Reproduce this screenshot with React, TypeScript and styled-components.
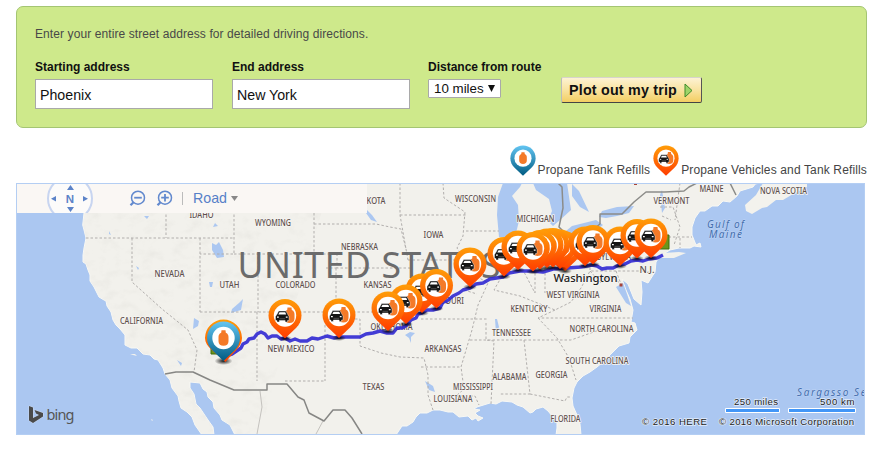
import React from 'react';
import styled, { createGlobalStyle } from 'styled-components';

const Global = createGlobalStyle`
  * { box-sizing: border-box; }
  body { margin: 0; background: #fff; font-family: "Liberation Sans", Arial, sans-serif; color: #444; overflow: hidden; }
`;
const Page = styled.main`
  width: 885px; height: 453px; padding: 6px 18px 0 16px;
  display: flex; flex-direction: column;
`;
const Panel = styled.form`
  width: 851px; height: 122px; background: #cee98b; border: 1px solid #a4c573; border-radius: 7px;
  padding: 20px 18px 0;
`;
const Intro = styled.p`
  margin: 0; font-size: 12px; line-height: 14px; letter-spacing: 0.09px; color: #484848;
`;
const Fields = styled.div`
  display: flex; align-items: flex-start; margin-top: 19px;
`;
const Field = styled.label<{ $width: number }>`
  width: ${p => p.$width}px; display: flex; flex-direction: column; align-items: flex-start;
  font-size: 12px; line-height: 14px; font-weight: bold; color: #111;
`;
const TextInput = styled.input`
  width: 178px; height: 30px; margin-top: 5px; padding: 2px 4px 0; border: 1px solid #a9a9a9;
  background: #fff; font: 14.2px "Liberation Sans", Arial, sans-serif; color: #111; outline: none;
`;
const Select = styled.button`
  width: 73px; height: 19px; margin-top: 5px; padding: 0 5px 1px; border: 1px solid #a9a9a9; border-radius: 1px;
  background: #fff; display: flex; align-items: center; justify-content: space-between;
  font: 13.33px "Liberation Sans", Arial, sans-serif; color: #111; white-space: nowrap;
`;
const Submit = styled.button`
  width: 141px; height: 26px; margin-top: 17px; padding: 0 8px 0 7px; display: flex; align-items: center; justify-content: space-between;
  background: linear-gradient(#fdf2d3, #f9e3a0 50%, #f3ce62); border: 1px solid; border-color: #d8d4cc #555 #444 #bbb;
  border-radius: 2px; font: bold 14.3px "Liberation Sans", Arial, sans-serif; letter-spacing: 0.2px; color: #111; white-space: nowrap;
`;
const Legend = styled.div`
  height: 55px; display: flex; justify-content: flex-end; align-items: flex-start; padding-top: 17px;
`;
const LegendItem = styled.div`
  display: flex; align-items: flex-start; margin-left: 3px;
  font-size: 12px; line-height: 14px; color: #444; white-space: nowrap; letter-spacing: 0.14px;
`;
const LegendText = styled.span`padding-top: 18px;`;
const LegendIcon = styled.svg`width: 26px; height: 34px; margin-right: 2px; overflow: visible;`;
const MapBox = styled.section`
  position: relative; width: 849px; height: 252px; border: 1px solid #b4cef3; overflow: hidden; background: #abc7f1;
`;
const MapDrawing = styled.svg`display: block; width: 847px; height: 250px;`;
const MapBar = styled.nav`
  position: absolute; top: 0; left: 0; width: 350px; height: 29px; padding-left: 30px;
  background: #faf7f4; display: flex; align-items: center; color: #5680c8; font-size: 14.2px;
`;
const Compass = styled.svg`width: 46px; height: 29px;`;
const ZoomIcon = styled.svg`width: 17px; height: 17px;`;
const Gap = styled.span<{ $w: number }>`width: ${p => p.$w}px;`;
const Divider = styled.span`width: 1px; height: 13px; background: #bbb; margin: 0 10px 0 9px;`;
const RoadLabel = styled.span`padding-bottom: 1px;`;
const Caret = styled.svg`width: 7px; height: 5px; margin-left: 4px;`;

type Pt = [number, number];
const pins: Pt[] = [
  [285, 315.5], [339, 315], [422, 290], [406, 301], [388, 308], [436.5, 285.5], [470, 264],
  [504, 253.5], [518, 247], [565, 248], [560, 246], [553, 244.5], [547, 245], [540, 246.5], [533, 248.5],
  [585, 243], [593, 241.5], [620, 243], [637, 235.5], [651, 235],
];

const labels: [string, number, number, number][] = [
  ['IDAHO', 189.5, 217.5, 24], ['KOTA', 366.5, 203.5, 19], ['WYOMING', 255, 225.5, 36], ['NEVADA', 154.5, 277, 30],
  ['UTAH', 219.5, 287.5, 20], ['COLORADO', 275.5, 287.5, 40], ['NEBRASKA', 341, 249.5, 37], ['KANSAS', 363.5, 287.5, 28],
  ['IOWA', 423.5, 237.5, 20], ['WISCONSIN', 455, 201.5, 41], ['MICHIGAN', 516.5, 221.5, 38], ['CALIFORNIA', 120, 323.5, 43],
  ['NEW MEXICO', 267.5, 351.5, 47], ['OKLAHOMA', 370.5, 329.5, 42], ['TEXAS', 362.5, 389.5, 22], ['ARKANSAS', 424.5, 351.5, 37],
  ['MISSOURI', 427, 303.5, 37], ['WEST VIRGINIA', 546.5, 297.5, 53], ['KENTUCKY', 510.5, 311.5, 37], ['VIRGINIA', 589.5, 311.5, 32],
  ['NORTH CAROLINA', 569.5, 331.5, 64], ['TENNESSEE', 492, 335.5, 39], ['SOUTH CAROLINA', 565.5, 363.5, 63],
  ['ALABAMA', 492.5, 379.5, 34], ['GEORGIA', 535.5, 377.5, 32], ['MISSISSIPPI', 453, 389.5, 40], ['LOUISIANA', 433.5, 401.5, 39],
  ['FLORIDA', 550.5, 421.5, 30], ['MAINE', 699.5, 191.5, 24], ['VERMONT', 653.5, 203.5, 36], ['NOVA SCOTIA', 760, 193.5, 47],
  ['PENNSYLVANIA', 577, 259.5, 54],
];

const HEAD = 'M-16.5 0C-16.5 -9.5 -9 -16.5 0 -16.5S16.5 -9.5 16.5 0C16.5 5 14.5 9 11 12.500L0 23L-11 12.500C-14.5 9 -16.5 5 -16.5 0Z';

const Tank = () => (
  <path d="M2.500 -8H6.500L6.800 -5.500C9 -4.500 9.500 -3 9.500 -1V3C9.500 6 7.500 7.500 4.500 7.500S-.5 6 -.5 3V-1C-.5 -3 0 -4.500 2.200 -5.500Z" fill="#f47a28" />
);
const CarPin = () => (
  <g>
    <path d={HEAD} fill="url(#orange)" />
    <circle r="11.2" fill="#fff" />
    <Tank />
    <path d="M-9.5 5V1L-8 -1.2L-6.3 -4.500H1L2.700 -1.200L4 1V5H2.500V6.500H.2V5H-5.700V6.500H-8V5Z" fill="#151515" stroke="#fff" strokeWidth=".4" />
    <path d="M-5.5 -3.300H.2L1.200 -1H-6.700Z" fill="#fff" />
    <path d="M-8 1.600H-6.200M.8 1.600H2.600" stroke="#fff" strokeWidth="1.100" />
    <path d="M-5.500 3.300H0" stroke="#888" strokeWidth=".5" />
  </g>
);
const TankPin = () => (
  <g>
    <path d={HEAD} fill="url(#blue)" />
    <circle r="11.2" fill="#fff" />
    <g transform="translate(-4.500 .2)"><Tank /></g>
  </g>
);
const PinPaints = () => (
  <defs>
    <linearGradient id="orange" x2="0" y2="1"><stop stopColor="#ff9d08" /><stop offset="1" stopColor="#ff3c00" /></linearGradient>
    <linearGradient id="blue" x2="0" y2="1"><stop stopColor="#63c5f2" /><stop offset="1" stopColor="#005b82" /></linearGradient>
    <radialGradient id="shade"><stop stopColor="#000" stopOpacity=".9" /><stop offset="1" stopColor="#000" stopOpacity="0" /></radialGradient>
    <filter id="relief" x="0" y="0" width="1" height="1">
      <feTurbulence type="fractalNoise" baseFrequency=".07 .1" numOctaves="3" seed="5" />
      <feColorMatrix values="0 0 0 0 .55  0 0 0 0 .54  0 0 0 0 .5  1.8 0 0 0 -.85" />
      <feComposite in2="SourceGraphic" operator="in" />
    </filter>
  </defs>
);

const WEST = 'M84 183V213L82.7 225L84 230L86 238L85 243L84 248L83 255L83 262L86 264L88 270L90 275L90 281L94 287L97 293L99 297L104 300L106 301L107 306L111 312L113 320L116 325L120 329L125 335L125 345L131 348L137 348L143 354L150 355L154 359L158 360L163 368L165 374L170 380L172 388L175 392L178 396L179 401L181 408L187 412L192 417L195 425L202 435H214L213 427L208 420L204 414L200 408L196 404L194 394L190 388L190 382L200 383L203 389L207 392L208 397L213 402L214 408L220 415L222 420L230 425L235 435';
const LAND = `${WEST}H396L402 426L407 426L413 422L416 417L420 413L427 413L433 410L440 410L448 412L453 412L459 417L468 416L472 420L476 418L478 421L483 418L478 416L475 413L480 410L474 409L477 407L490 403L496 404L502 401L512 402L517 405L523 407L530 413L533 412L536 409L543 407L548 411L553 417L557 420L557 428L556 435H581L580 424L577 415L573 406L572 398L574 388L577 382L583 376L590 372L597 367L603 362L610 355L619 346L629 343L630 337L637 330L635 323L631 322L633 310L630 299L626 290L622 279L628 284L634 299L641 305L642 292L641 280L648 283L655 272L656 262L660 256L670 250L679 248L690 248L694 246L701 247L700 243L696 245L692 235V227L695 218L700 211L705 211L712 206L718 206L723 201L730 202L737 196L740 191L753 187L756 183Z`;
const STATES = 'M86 238H234M166 183V238M132 238V282L162 309L188 330L197 350L194 372M200 238V312M200 312H421M257 312V381M234 183V254H200M234 254H258V312M258 254H314M314 213V270M314 224H376L390 227L401 229L406 249L408 260M314 254H337V268H410L416 285M336 268V312M337 268H326M326 312V319H360V346L381 353L400 357L424 358L428 375V395L433 410M285 381H325M325 325V381M400 183V215L406 249M400 215H467M408 260H463M443 183L444 198L465 212L463 236L457 248L467 265L476 276L488 283L478 305L472 330L461 367L464 389L456 396H475L479 405M421 319H487M470 340H571L605 328M421 367H461M486 323V340L494 341L491 404M466 231H499M535 237V293L524 272M503 241L502 276L494 290L520 296L555 310L571 302L581 288L590 271H646M555 310L538 318H633M538 318L557 338L569 358L576 380M524 340L530 394H500M530 394L565 401L567 397H571M545 237V293M553 237H590V271M655 237H692M660 207L673 207L680 227L674 245M680 183L675 220M662 216L671 220M680 238V248M464 290L477 294M616 271L621 284M590 271L601 283L610 276L620 283';
const ROUTE = 'M225 356L232 354L238 350L241 348L243 344L247 342L249 339L254 338L257 334L261 332L265 334L268 338L272 336L277 336L281 339L285 338L290 341L295 339L300 341L307 341L312 338L318 339L327 336L334 338L339 337L360 337L366 334L373 333L380 331L387 333L393 333L397 328L402 328L407 325L411 320L416 318L418 314L422 313L427 310L433 310L440 308L443 302L447 301L453 296L459 293L463 290L470 288L476 284L483 283L490 279L503 277L509 273L520 271L532 271L543 272L553 269L567 268L581 267L592 265L597 266L602 269L607 268L613 268L619 265L625 264L631 261L637 260L643 261L649 259L657 258L663 255';

const PropaneMap = () => (
  <MapDrawing viewBox="17 184 847 250" fontFamily='"Noto Sans", sans-serif'>
    <PinPaints />
    <path d={LAND} fill="#f2f1ec" stroke="#f8f8f4" strokeWidth="1" />
    <path d={`${WEST}H260L285 340L330 183Z`} filter="url(#relief)" opacity=".19" />
    <g fill="#f3f2ed">
      <path d="M763 183L756 195L745 205L746 211L752 214L762 208L767 207L776 200L783 200L793 194L807 187V183Z" />
      <path d="M659 258L674 258L686 253L679 252L663 253ZM758 184L750 185L745 188Z" />
      <path d="M130 354l5 0 2 2-4-1ZM137 357l3 1ZM151 419l2 1-1 1Z" />
    </g>
    <g fill="#abc7f1">
      <path d="M503 183L498 197L497 215L499 237H515L519 221L518 205L512 196L520 187L522 183Z" />
      <path d="M533 183L536 190L549 199L552 211L548 221L553 226L560 220L571 210L567 183ZM572 184L579 191L589 212L580 207L572 196Z" />
      <path d="M560 236L572 226L596 220L603 225L590 235L574 242Z" />
      <path d="M599 217L602 211L617 207L634 206L629 213L617 216L606 218Z" />
      <path d="M212 243L216 245L219 242L223 250L224 257L217 258L212 250ZM232 309L239 303L243 299L241 310L231 313ZM209 282h4l-1 5h-2ZM215 223l3 3-5 1ZM144 216h5l-2 3ZM136 266l3 2-1 2ZM109 231l2 4-2-1ZM177 360l5 3-1 3ZM194 318l5 3-1 5-5 3Z" />
      <path d="M405 335l5-3 5 1-4 4v6l-2-5ZM425 381l8 5 2 6-6-2ZM495 319l2 0 2 8-3 6ZM367 210l5 5 5 7-6-2-5-7ZM616 287l7-4 4 11 4 12-5-3-5-8ZM660 195l2-5 3 18-3 5Z" />
    </g>
    <g fill="none" strokeLinejoin="round">
      <path d={STATES} stroke="#b1aeac" strokeWidth="1" strokeDasharray="2.5 2" />
      <path d="M260 391L262 407L257 434M323 421L316 434" stroke="#c4c2be" />
      <path d="M165 374L176 372H193L210 380L234 390H267V384H287L298 397L304 400L309 413L324 421L333 410H345L352 418L362 434" stroke="#868684" strokeWidth="1.5" />
      <path d="M558 183L562 187L563 208L559 227L570 238M585 236L600 224L600 214L622 214L634 202L646 192H665L684 191L689 187L697 183M730 183L736 195" stroke="#8c8c89" strokeWidth="1.5" />
    </g>
    <text x="237.5" y="277.5" textLength="263" fontSize="35.5" fill="#6b6b6b">UNITED STATES</text>
    <g fontSize="8" fontWeight="500" fill="#5e504d" stroke="#f6f5f2" strokeWidth="1.6" paintOrder="stroke" strokeLinejoin="round">
      {labels.map(([text, x, y, width]) => <text key={text} x={x} y={y} textLength={width} lengthAdjust="spacingAndGlyphs">{text}</text>)}
      <text x="639.5" y="273" fontSize="9.5" textLength="15">N.J.</text>
      <text x="553.5" y="282" fontSize="11.3" fill="#222" textLength="64">Washington</text>
    </g>
    <path d="M619.500 283.500h3v3h-3ZM634 183h3v2h-3Z" fill="#a94438" />
    <g fontSize="10" fontStyle="italic" fill="#446eae" stroke="#c0d5f5" strokeWidth="1" paintOrder="stroke">
      <text x="707" y="228" textLength="37">Gulf of</text><text x="709" y="238" textLength="33">Maine</text>
      <text x="797" y="396" textLength="76">Sargasso Sea</text>
    </g>
    <path d="M211 344h12v10h-12ZM660 235h9v14h-9Z" fill="#6d951b" stroke="#3f6d10" />
    <path d={ROUTE} fill="none" stroke="#3028d3" strokeWidth="3.4" strokeOpacity=".9" strokeLinejoin="round" />
    {pins.map(([x, y]) => (
      <g key={`${x}-${y}`} transform={`translate(${x} ${y})`}>
        <ellipse cy="23" rx="7" ry="3" fill="url(#shade)" /><CarPin />
      </g>
    ))}
    <g transform="translate(223.500 338)">
      <ellipse cy="23" rx="9" ry="4" fill="url(#shade)" />
      <path d="M-18.500 0A18.500 18.500 0 0 1 18.500 0C18.500 9 9 15 2 24C-8 14 -18.500 9 -18.500 0Z" fill="url(#orange)" />
      <TankPin />
    </g>
    <g transform="translate(29 406)">
      <path d="M0 0L4 1.500V12L10 9L7 7.500L5.500 4L14 7V10.500L4 17L0 14.500Z" fill="#4a4a4a" stroke="#d8e3f3" strokeWidth=".7" paintOrder="stroke" />
      <text x="17.500" y="14" fontSize="14.500" fill="#555" textLength="28">bing</text>
    </g>
    <g fontFamily='"Liberation Sans", Arial, sans-serif' fontSize="9.6" fill="#222" stroke="#e3edfb" strokeWidth="1.3" paintOrder="stroke">
      <text x="734" y="405" textLength="44">250 miles</text><text x="820" y="405" textLength="34.500">500 km</text>
      <text x="642" y="425" textLength="65">© 2016 HERE</text><text x="719" y="425" textLength="135">© 2016 Microsoft Corporation</text>
    </g>
    <path d="M725.500 408.500h54v4h-54ZM788.500 408.500h67v4h-67Z" fill="#4296f7" stroke="#fff" />
  </MapDrawing>
);

const Magnifier = ({ plus = false }: { plus?: boolean }) => (
  <ZoomIcon viewBox="0 0 17 17" fill="none" stroke="#6289ce" strokeWidth="1.500">
    <circle cx="9" cy="7.700" r="6.500" /><path d="M4.300 12.500L1.500 15.300" strokeWidth="2.200" />
    <path d={plus ? 'M5.200 7.700H12.800M9 3.900V11.500' : 'M5.200 7.700H12.800'} strokeWidth="1.800" />
  </ZoomIcon>
);

export default function App() {
  return (
    <Page>
      <Global />
      <Panel onSubmit={event => event.preventDefault()}>
        <Intro>Enter your entire street address for detailed driving directions.</Intro>
        <Fields>
          <Field $width={197}>Starting address<TextInput defaultValue="Phoenix" /></Field>
          <Field $width={196}>End address<TextInput defaultValue="New York" /></Field>
          <Field $width={133}>Distance from route
            <Select type="button">10 miles<svg width="7" height="7"><path d="M0 0H7L3.500 7Z" fill="#111" /></svg></Select>
          </Field>
          <Submit>Plot out my trip<svg width="9" height="15"><path d="M1 1L8 7.500L1 14Z" fill="#9ed468" stroke="#3f8a2a" /></svg></Submit>
        </Fields>
      </Panel>
      <Legend>
        <LegendItem><LegendIcon viewBox="-17 -17 34 44"><TankPin /></LegendIcon><LegendText>Propane Tank Refills</LegendText></LegendItem>
        <LegendItem><LegendIcon viewBox="-17 -17 34 44"><CarPin /></LegendIcon><LegendText>Propane Vehicles and Tank Refills</LegendText></LegendItem>
      </Legend>
      <MapBox>
        <PropaneMap />
        <MapBar>
          <Compass viewBox="0 0 46 29">
            <circle cx="23" cy="14.500" r="22" fill="#fcfbfa" stroke="#c8d5f0" strokeWidth="2" />
            <path d="M20 6L23.500 1L27 6ZM20 23L23.500 28L27 23ZM9 12V17.500L4 14.700ZM36 12V17.500L41 14.700Z" fill="#5c83c8" />
            <text x="23" y="19" textAnchor="middle" fontSize="11.500" fontWeight="bold" fill="#5c83c8">N</text>
          </Compass>
          <Gap $w={36} /><Magnifier /><Gap $w={10} /><Magnifier plus />
          <Divider /><RoadLabel>Road</RoadLabel><Caret viewBox="0 0 7 5"><path d="M0 0H7L3.500 5Z" fill="#888" /></Caret>
        </MapBar>
      </MapBox>
    </Page>
  );
}
